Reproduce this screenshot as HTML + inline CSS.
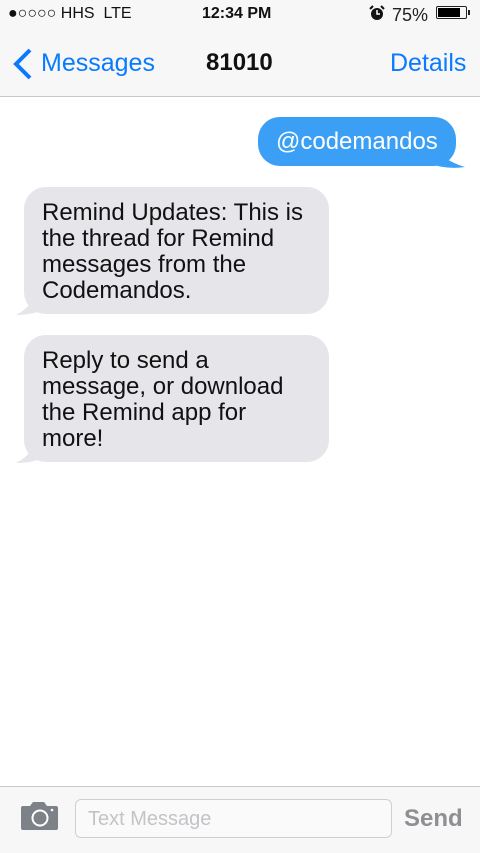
<!DOCTYPE html>
<html><head><style>
body{margin:0;width:480px;height:852px;background:#fff;font-family:"Liberation Sans",Arial,sans-serif;position:relative;overflow:hidden}
.a{position:absolute}
.bar{left:0;top:0;width:480px;height:96px;background:#f7f7f7;border-bottom:1px solid #c8c8cc}
.b{border-radius:22px;font-size:24px;line-height:26px}
</style></head><body>
<div class="a bar"></div>
<div class="a" style="left:8px;top:5px;font-size:16px;color:#111">●○○○○ HHS&nbsp; LTE</div>
<div class="a" style="left:202px;top:5px;font-size:16px;font-weight:bold;color:#111">12:34 PM</div>
<svg class="a" style="left:369px;top:5px" width="16" height="16"><circle cx="8" cy="9" r="6" fill="#111"/><path d="M8 5V9H11" stroke="#fff" stroke-width="1.5" fill="none"/><path d="M1 4L4 1M15 4L12 1" stroke="#111" stroke-width="2"/></svg>
<div class="a" style="left:392px;top:5px;font-size:18px;color:#222">75%</div>
<div class="a" style="left:436px;top:6px;width:31px;height:13px;border:1px solid #222;border-radius:2px;box-sizing:border-box"><div style="margin:1px;width:22px;height:9px;background:#000"></div></div>
<div class="a" style="left:468px;top:10px;width:2px;height:5px;background:#222"></div>
<svg class="a" style="left:11px;top:47px" width="22" height="34"><path d="M19 3 L5 17 L19 31" stroke="#0a7aff" stroke-width="4" fill="none"/></svg>
<div class="a" style="left:41px;top:49px;font-size:25px;color:#0a7aff">Messages</div>
<div class="a" style="left:206px;top:49px;font-size:24px;font-weight:bold;color:#111">81010</div>
<div class="a" style="left:390px;top:49px;font-size:25px;color:#0a7aff">Details</div>

<svg class="a" style="left:420px;top:140px" width="50" height="30"><path d="M10 0 Q20 20 45 27 Q25 30 5 22Z" fill="#3a9ff5"/></svg>
<div class="a b" style="left:258px;top:117px;width:198px;height:49px;background:#3a9ff5;color:#fff;box-sizing:border-box;padding:12px 0 0 18px">@codemandos</div>

<svg class="a" style="left:10px;top:285px" width="40" height="32"><path d="M30 0 Q25 20 6 30 Q25 30 40 22Z" fill="#e5e5ea"/></svg>
<div class="a b" style="left:24px;top:187px;width:305px;height:127px;background:#e5e5ea;color:#111;box-sizing:border-box;padding:13px 0 0 18px">Remind Updates: This is<br>the thread for Remind<br>messages from the<br>Codemandos.</div>

<svg class="a" style="left:10px;top:433px" width="40" height="32"><path d="M30 0 Q25 20 6 30 Q25 30 40 22Z" fill="#e5e5ea"/></svg>
<div class="a b" style="left:24px;top:335px;width:305px;height:127px;background:#e5e5ea;color:#111;box-sizing:border-box;padding:13px 0 0 18px">Reply to send a<br>message, or download<br>the Remind app for<br>more!</div>

<div class="a" style="left:0;top:786px;width:480px;height:66px;background:#f7f7f7;border-top:1px solid #c8c8cc"></div>
<svg class="a" style="left:20px;top:801px" width="39" height="30"><path d="M3 5 H10 L13 1 H24 L27 5 H36 Q38 5 38 7 V27 Q38 29 36 29 H3 Q1 29 1 27 V7 Q1 5 3 5Z" fill="#7d8289"/><circle cx="20" cy="17" r="7.5" fill="none" stroke="#fff" stroke-width="2"/><circle cx="32" cy="9" r="1.3" fill="#fff"/></svg>
<div class="a" style="left:75px;top:799px;width:317px;height:39px;border:1px solid #cfcfd3;border-radius:6px;background:#fafafa;box-sizing:border-box"></div>
<div class="a" style="left:88px;top:808px;font-size:20px;color:#c4c4c8">Text Message</div>
<div class="a" style="left:404px;top:805px;font-size:24px;font-weight:bold;color:#8e8e93">Send</div>
</body></html>
